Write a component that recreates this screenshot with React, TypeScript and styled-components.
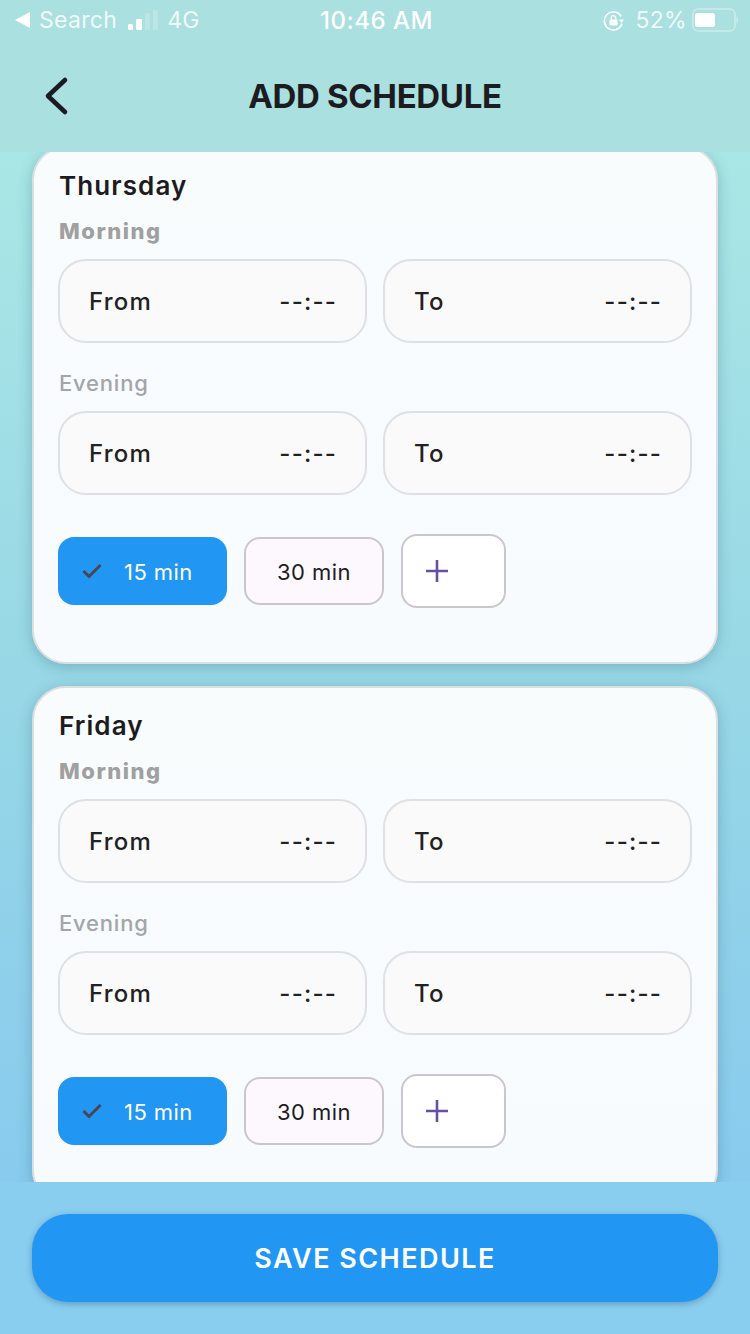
import React from 'react'
import styled, { createGlobalStyle } from 'styled-components'

const GlobalStyle = createGlobalStyle`
  html, body {
    margin: 0;
    padding: 0;
  }
  body {
    font-family: Inter, "Liberation Sans", sans-serif;
  }
`

const Screen = styled.div`
  width: 750px;
  height: 1334px;
  display: flex;
  flex-direction: column;
  overflow: hidden;
  background: linear-gradient(180deg, #aeebe5 0%, #98d8e6 50%, #83c7f0 100%);
`

const Header = styled.header`
  height: 152px;
  flex: none;
  display: flex;
  flex-direction: column;
  background: #aae0df;
`

const StatusBar = styled.div`
  height: 40px;
  padding: 0 12px 0 15px;
  display: flex;
  align-items: center;
  justify-content: space-between;
  color: rgba(255, 255, 255, 0.85);
  font-size: 23px;
  letter-spacing: 0.3px;
`

const StatusGroup = styled.div`
  width: 240px;
  display: flex;
  align-items: center;
  gap: 9px;
  justify-content: ${({ $end }: { $end?: boolean }) => ($end ? 'flex-end' : 'flex-start')};
`

const Clock = styled.span`
  color: #fff;
  font-size: 24px;
  font-weight: 500;
  letter-spacing: 0.5px;
`

const LockIcon = styled.svg`
  margin-right: 2px;
`

const BatteryIcon = styled.svg`
  margin-left: -4px;
`

const NavBar = styled.div`
  position: relative;
  flex: 1;
  display: flex;
  align-items: center;
  justify-content: center;
`

const BackButton = styled.button`
  position: absolute;
  left: 38px;
  top: 34px;
  width: 36px;
  height: 44px;
  padding: 0;
  border: none;
  background: transparent;
  color: #1c1b1f;
`

const Title = styled.h1`
  margin: 0;
  font-size: 33px;
  font-weight: 700;
  letter-spacing: -0.35px;
  color: #1c1b1f;
`

const ScrollArea = styled.main`
  flex: 1;
  min-height: 0;
  overflow: hidden;
`

const CardList = styled.div`
  margin: -6px 32px 0;
  display: flex;
  flex-direction: column;
  gap: 22px;
`

const Card = styled.section`
  height: 518px;
  box-sizing: border-box;
  padding: 20px 24px 0;
  background: linear-gradient(180deg, #f9fcfd 0%, #f8fbfe 100%);
  border: 2px solid #dcdee0;
  border-radius: 34px;
  box-shadow: 0 3px 14px rgba(40, 90, 110, 0.3);
`

const DayName = styled.h2`
  margin: 0;
  height: 36px;
  padding-left: 1px;
  line-height: 36px;
  font-size: 26px;
  font-weight: 600;
  letter-spacing: 1.1px;
  color: #1c1b1f;
`

const PeriodLabel = styled.div<{ $strong?: boolean }>`
  height: 28px;
  line-height: 28px;
  margin-top: ${({ $strong }) => ($strong ? '13px' : '26px')};
  margin-bottom: 14px;
  padding-left: 1px;
  font-size: 22px;
  font-weight: ${({ $strong }) => ($strong ? 800 : 500)};
  letter-spacing: ${({ $strong }) => ($strong ? '1.5px' : '0.8px')};
  color: ${({ $strong }) => ($strong ? '#a0a0a0' : '#a3a5a8')};
`

const FieldRow = styled.div`
  display: grid;
  grid-template-columns: 309px 309px;
  gap: 16px;
`

const TimeField = styled.div`
  height: 84px;
  box-sizing: border-box;
  padding: 0 28px 0 29px;
  display: flex;
  align-items: center;
  justify-content: space-between;
  background: #fafafa;
  border: 2px solid #dfe0e4;
  border-radius: 28px;
  font-size: 24px;
  font-weight: 500;
  letter-spacing: 1.2px;
  color: #212121;
`

const ChipRow = styled.div`
  margin-top: 39px;
  display: flex;
  align-items: center;
  gap: 17px;
`

const Chip = styled.div<{ $selected?: boolean }>`
  height: 68px;
  box-sizing: border-box;
  display: flex;
  align-items: center;
  justify-content: ${({ $selected }) => ($selected ? 'flex-start' : 'center')};
  gap: 22px;
  padding-left: ${({ $selected }) => ($selected ? '24px' : '0')};
  width: ${({ $selected }) => ($selected ? '169px' : '140px')};
  background: ${({ $selected }) => ($selected ? '#2196f3' : '#fdf8fe')};
  border: ${({ $selected }) => ($selected ? 'none' : '2px solid #cbc5cf')};
  border-radius: 16px;
  font-size: 22px;
  letter-spacing: 0.45px;
  color: ${({ $selected }) => ($selected ? '#fff' : '#1c1b1f')};
`

const ChipText = styled.span`
  padding-top: 2px;
`

const AddChip = styled.button`
  width: 105px;
  height: 74px;
  box-sizing: border-box;
  padding: 0 0 0 23px;
  display: flex;
  align-items: center;
  background: #fff;
  border: 2px solid #cbc5cf;
  border-radius: 16px;
`

const Footer = styled.footer`
  height: 152px;
  flex: none;
  box-sizing: border-box;
  padding: 32px 32px 0;
  background: #89cdef;
`

const SaveButton = styled.button`
  width: 100%;
  height: 88px;
  border: none;
  border-radius: 36px;
  background: #2196f3;
  box-shadow: 0 2px 6px rgba(30, 70, 110, 0.35);
  color: #fff;
  font-family: inherit;
  font-size: 27px;
  font-weight: 600;
  letter-spacing: 1.45px;
`

const SignalBars = () => (
  <svg width="32" height="22" viewBox="0 0 32 22">
    <rect x="2" y="15" width="5" height="6" rx="1.5" fill="#fff" />
    <rect x="10" y="10" width="6" height="11" rx="1.5" fill="#fff" />
    <rect x="19" y="4" width="5" height="17" rx="1.5" fill="#fff" fillOpacity="0.2" />
    <rect x="27" y="1" width="5" height="20" rx="1.5" fill="#fff" fillOpacity="0.2" />
  </svg>
)

const RotationLock = () => (
  <LockIcon width="21" height="21" viewBox="0 0 21 21" fill="none">
    <path d="M18.2 6.5A9 9 0 1 0 19 13.5" stroke="#fff" strokeWidth="1.7" />
    <path d="M16 9.5h5l-2.5 3.5z" fill="#fff" />
    <rect x="6.5" y="9.5" width="8" height="6" rx="1" fill="#fff" />
    <path d="M8.2 9.5V8a2.3 2.3 0 0 1 4.6 0v1.5" stroke="#fff" strokeWidth="1.3" />
  </LockIcon>
)

const Battery = () => (
  <BatteryIcon width="46" height="24" viewBox="0 0 46 24" fill="none">
    <rect x="1" y="1" width="42" height="22" rx="5" stroke="#fff" strokeOpacity="0.4" strokeWidth="1.5" />
    <rect x="3" y="5" width="20" height="14" rx="2.5" fill="#fff" />
    <path d="M44.5 8.5c1 .5 1.5 2 1.5 3.5s-.5 3-1.5 3.5z" fill="#fff" fillOpacity="0.4" />
  </BatteryIcon>
)

const Day = ({ name }: { name: string }) => (
  <Card>
    <DayName>{name}</DayName>
    <PeriodLabel $strong>Morning</PeriodLabel>
    <FieldRow>
      <TimeField><span>From</span><span>--:--</span></TimeField>
      <TimeField><span>To</span><span>--:--</span></TimeField>
    </FieldRow>
    <PeriodLabel>Evening</PeriodLabel>
    <FieldRow>
      <TimeField><span>From</span><span>--:--</span></TimeField>
      <TimeField><span>To</span><span>--:--</span></TimeField>
    </FieldRow>
    <ChipRow>
      <Chip $selected>
        <svg width="20" height="16" viewBox="0 0 20 16" fill="none">
          <path d="M1.5 8 7 13.5 18.5 2" stroke="#49454f" strokeWidth="3" />
        </svg>
        <ChipText>15 min</ChipText>
      </Chip>
      <Chip><ChipText>30 min</ChipText></Chip>
      <AddChip aria-label="Add">
        <svg width="22" height="22" viewBox="0 0 22 22" fill="none">
          <path d="M11 0v22M0 11h22" stroke="#6750a4" strokeWidth="2.6" />
        </svg>
      </AddChip>
    </ChipRow>
  </Card>
)

export default function App() {
  return (
    <>
      <GlobalStyle />
      <Screen>
        <Header>
          <StatusBar>
            <StatusGroup>
              <svg width="15" height="16" viewBox="0 0 15 16"><path d="M15 0v16L0 8z" fill="#fff" /></svg>
              <span>Search</span>
              <SignalBars />
              <span>4G</span>
            </StatusGroup>
            <Clock>10:46 AM</Clock>
            <StatusGroup $end>
              <RotationLock />
              <span>52%</span>
              <Battery />
            </StatusGroup>
          </StatusBar>
          <NavBar>
            <BackButton aria-label="Back">
              <svg width="36" height="44" viewBox="0 0 36 44" fill="none">
                <path d="M27 6 10 22l17 16" stroke="currentColor" strokeWidth="4.6" strokeLinecap="round" strokeLinejoin="round" />
              </svg>
            </BackButton>
            <Title>ADD SCHEDULE</Title>
          </NavBar>
        </Header>
        <ScrollArea>
          <CardList>
            <Day name="Thursday" />
            <Day name="Friday" />
          </CardList>
        </ScrollArea>
        <Footer>
          <SaveButton>SAVE SCHEDULE</SaveButton>
        </Footer>
      </Screen>
    </>
  )
}
